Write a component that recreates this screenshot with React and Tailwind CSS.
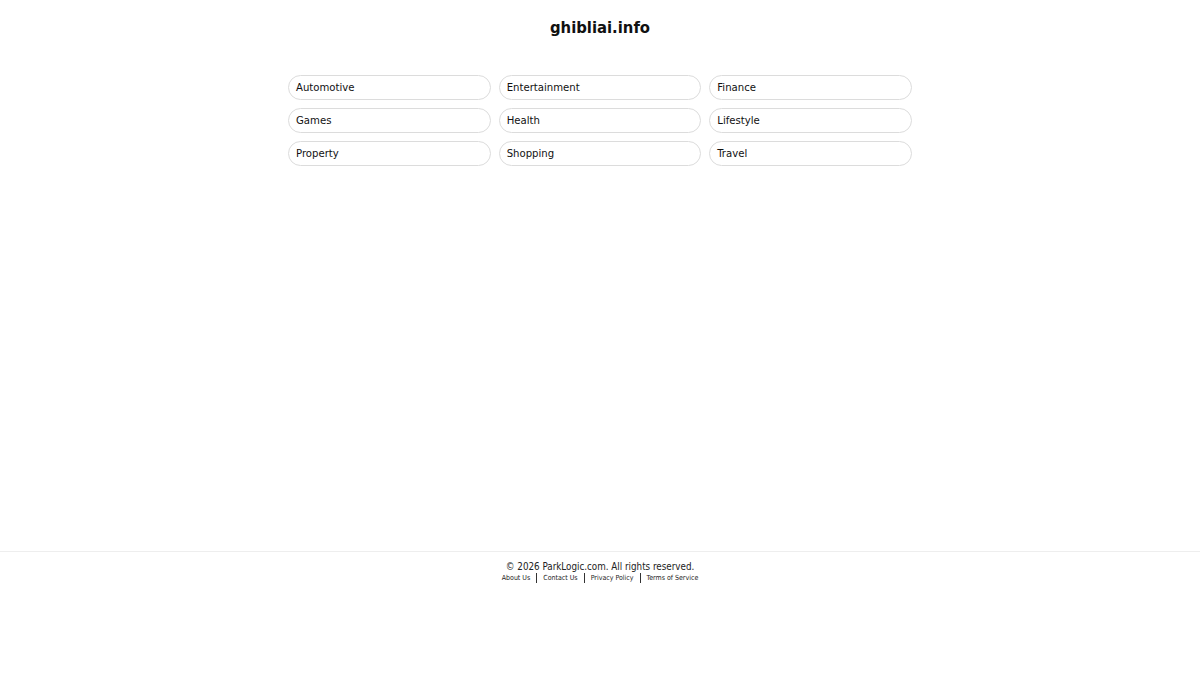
export default function App() {
  const cats = ["Automotive","Entertainment","Finance","Games","Health","Lifestyle","Property","Shopping","Travel"];
  return (
    <div className="bg-white text-[#111] min-h-[675px]" style={{fontFamily: '"DejaVu Sans Condensed", "DejaVu Sans", sans-serif'}}>
      <div className="h-[551px] flex flex-col items-center">
        <h1 className="mt-[18px] text-[16.5px] font-bold leading-[20px] text-[#111]">ghibliai.info</h1>
        <div className="mt-[37px] w-[624px] grid grid-cols-3 gap-x-[8px] gap-y-[8px]">
          {cats.map(c => (
            <div key={c} className="h-[25px] rounded-full border border-[#dcdcdc] flex items-center px-[7px] pt-[2px] text-[11.25px] text-[#111]">{c}</div>
          ))}
        </div>
      </div>
      <footer className="border-t border-[#eee] pt-[8px] flex flex-col items-center">
        <div className="text-[9.75px] leading-[13px] text-[#222]">© 2026 ParkLogic.com. All rights reserved.</div>
        <div className="flex items-center text-[7px] leading-[10px] text-[#222]">
          <span>About Us</span>
          <span className="mx-[6px] w-[1px] h-[10px] bg-[#333]"></span>
          <span>Contact Us</span>
          <span className="mx-[6px] w-[1px] h-[10px] bg-[#333]"></span>
          <span>Privacy Policy</span>
          <span className="mx-[6px] w-[1px] h-[10px] bg-[#333]"></span>
          <span>Terms of Service</span>
        </div>
      </footer>
    </div>
  );
}
